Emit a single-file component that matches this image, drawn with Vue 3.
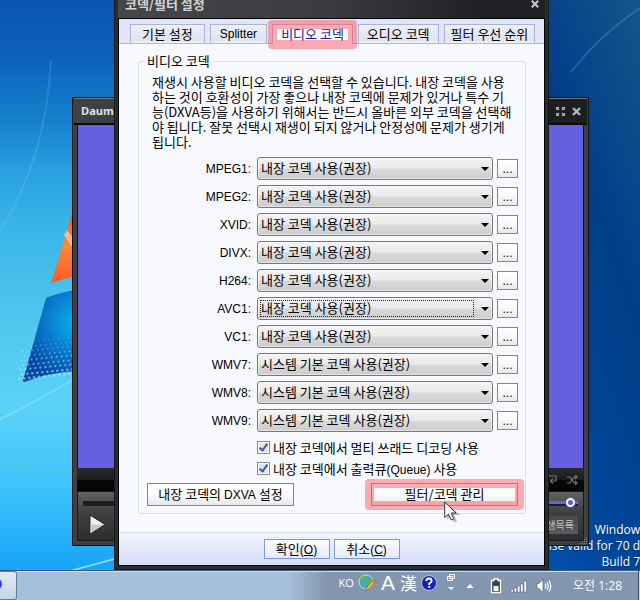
<script setup>
import { reactive, ref } from 'vue'

const tabs = [
  { name: '기본 설정', size: 'roomy' },
  { name: 'Splitter', size: 'latin' },
  { name: '비디오 코덱', size: '' },
  { name: '오디오 코덱', size: '' },
  { name: '필터 우선 순위', size: 'tight' }
]
const activeTab = ref('비디오 코덱')

const builtIn = '내장 코덱 사용(권장)'
const system = '시스템 기본 코덱 사용(권장)'
const codecs = reactive([
  { id: 'MPEG1', value: builtIn },
  { id: 'MPEG2', value: builtIn },
  { id: 'XVID', value: builtIn },
  { id: 'DIVX', value: builtIn },
  { id: 'H264', value: builtIn },
  { id: 'AVC1', value: builtIn, focused: true },
  { id: 'VC1', value: builtIn },
  { id: 'WMV7', value: system },
  { id: 'WMV8', value: system },
  { id: 'WMV9', value: system }
])
const multiThread = ref(true)
const outputQueue = ref(true)

// Halftone dots along the lower edge of the blue pane
const dots = []
for (let r = 0; r < 9; r++) {
  for (let c = 0; c < 13; c++) {
    dots.push({ x: 24 + c * 5 + (r % 2) * 2.5 - r * 0.6, y: 342 + r * 4.6 - c * 0.5, r: 0.5 + r * 0.11 })
  }
}
</script>

<template>
  <div class="desktop">
    <main class="workspace">
      <div class="wallpaper-right"></div>
      <svg class="logo" width="120" height="571" viewBox="0 0 120 571" aria-hidden="true">
        <defs>
          <linearGradient id="orange" x1="0" y1="0" x2="0" y2="1">
            <stop offset="0" stop-color="#ee4a10" />
            <stop offset=".5" stop-color="#f98a3c" />
            <stop offset="1" stop-color="#fb5a20" />
          </linearGradient>
          <radialGradient id="pane" gradientUnits="userSpaceOnUse" cx="78" cy="322" r="62">
            <stop offset="0" stop-color="#06b8f0" />
            <stop offset=".45" stop-color="#0880d2" />
            <stop offset="1" stop-color="#0646a0" />
          </radialGradient>
        </defs>
        <path d="M51 60C48 125 32 180 0 231" fill="none" stroke="#9ad8ff" stroke-opacity=".18" stroke-width="2" />
        <path d="M0 419Q30 405 72 380" fill="none" stroke="#c9f3ff" stroke-opacity=".3" stroke-width="2" />
        <path d="M0 467L72 472" stroke="#6ee08a" stroke-opacity=".4" />
        <path d="M70 571L118 558" stroke="#c6efff" stroke-opacity=".8" stroke-width="1.5" />
        <path d="M74 206L51 283L74 276Z" fill="url(#orange)" />
        <path d="M67 230L74 239V250L64 235Z" fill="#ffc49a" fill-opacity=".8" />
        <path d="M46 298Q58 293 74 290V371Q48 373 24 382Q22 381 24 377Z" fill="url(#pane)" />
        <circle v-for="(d, i) in dots" :key="i" :cx="d.x" :cy="d.y" :r="d.r" fill="#a8ecff" fill-opacity=".6" />
      </svg>
      <svg class="streak" width="91" height="97" viewBox="0 0 91 97" aria-hidden="true">
        <path d="M91 8Q52 34 22 72" fill="none" stroke="#7fb6dc" stroke-opacity=".25" stroke-width="2" />
      </svg>

      <div class="watermark">
        <div>Window</div>
        <div>ense valid for 70 d</div>
        <div>Build 7</div>
      </div>

      <section class="player" aria-label="Daum">
        <header class="player-title">
          <span>Daum</span>
          <span class="window-icons">
            <svg width="9" height="9" viewBox="0 0 9 9" fill="none" stroke="#b4b4b6" stroke-width="1.200">
              <path d="M.7 3V.7H3M6 .7h2.300V3M8.300 6v2.300H6M3 8.300H.7V6M1 1l2 2M8 1L6 3M8 8L6 6M1 8l2-2" />
            </svg>
            <svg width="9" height="9" viewBox="0 0 9 9" stroke="#b4b4b6" stroke-width="2.400"><path d="M1 1l7 7M8 1L1 8" /></svg>
          </span>
        </header>
        <div class="video"></div>
        <div class="status">
          <svg width="12" height="10" viewBox="0 0 12 10" fill="none" stroke="#747478" stroke-width="1.200">
            <path d="M2 1h7v5H4M6 3.500L3.500 6 6 8.500" />
          </svg>
          <svg width="11" height="10" viewBox="0 0 11 10" fill="none" stroke="#747478" stroke-width="1.200">
            <path d="M0 2h3l4 6h3M0 8h3l4-6h3M8 0l2 2-2 2M8 6l2 2-2 2" />
          </svg>
        </div>
        <div class="controls">
          <div class="seek"><i></i></div>
          <svg class="knob" width="11" height="11" viewBox="0 0 11 11">
            <circle cx="5.500" cy="5.500" r="5" fill="#f4f4ff" stroke="#333" stroke-width=".6" />
            <circle cx="5.500" cy="5.500" r="2.500" fill="#5a5be6" />
          </svg>
          <div class="control-row">
            <svg width="17" height="21" viewBox="0 0 17 21">
              <path d="M1 1L16 10.500L1 20Z" fill="#f1f1f1" stroke="#222" />
              <path d="M1.500 10.500H15L1.500 19Z" fill="#c9c9cb" />
            </svg>
            <button type="button" class="playlist">재생목록</button>
          </div>
        </div>
        <svg class="grip" width="8" height="8" viewBox="0 0 8 8" fill="#8b8b8b">
          <path d="M6 0h1v1H6zM4 2h1v1H4zM6 2h1v1H6zM2 4h1v1H2zM4 4h1v1H4zM6 4h1v1H6zM0 6h1v1H0zM2 6h1v1H2zM4 6h1v1H4zM6 6h1v1H6z" />
        </svg>
      </section>

      <section class="dialog" role="dialog" aria-labelledby="dialog-title">
        <header class="titlebar">
          <h1 id="dialog-title">코덱/필터 설정</h1>
          <button type="button" aria-label="닫기">
            <svg width="8" height="8" viewBox="0 0 8 8" stroke="#c8c8c8" stroke-width="2"><path d="M.8.8l6.400 6.400M7.200.8L.8 7.200" /></svg>
          </button>
        </header>
        <div class="body">
          <div class="tabs" role="tablist">
            <button
              v-for="t in tabs"
              :key="t.name"
              type="button"
              role="tab"
              class="tab"
              :class="[t.size, { active: activeTab === t.name }]"
              :aria-selected="activeTab === t.name"
              @click="activeTab = t.name"
            >{{ t.name }}</button>
          </div>

          <fieldset>
            <legend>비디오 코덱</legend>
            <p class="description">
              재생시 사용할 비디오 코덱을 선택할 수 있습니다. 내장 코덱을 사용<br />
              하는 것이 호환성이 가장 좋으나 내장 코덱에 문제가 있거나 특수 기<br />
              능(DXVA등)을 사용하기 위해서는 반드시 올바른 외부 코덱을 선택해<br />
              야 됩니다. 잘못 선택시 재생이 되지 않거나 안정성에 문제가 생기게<br />
              됩니다.
            </p>
            <div class="codecs">
              <div v-for="c in codecs" :key="c.id" class="codec">
                <label class="latin" :for="c.id">{{ c.id }}:</label>
                <span class="combo" :class="{ focused: c.focused }">
                  <select :id="c.id" v-model="c.value">
                    <option>{{ c.value }}</option>
                  </select>
                </span>
                <button type="button" class="more">...</button>
              </div>
            </div>
            <div class="checks">
              <label><input v-model="multiThread" type="checkbox" />내장 코덱에서 멀티 쓰래드 디코딩 사용</label>
              <label><input v-model="outputQueue" type="checkbox" /><span>내장 코덱에서 출력큐<span class="latin">(Queue)</span> 사용</span></label>
            </div>
            <div class="actions">
              <button type="button" class="push">내장 코덱의 <span class="latin">DXVA</span> 설정</button>
              <button type="button" class="push marked">필터/코덱 관리</button>
            </div>
          </fieldset>

          <footer>
            <button type="button">확인<span class="latin">(<u>O</u>)</span></button>
            <button type="button">취소<span class="latin">(<u>C</u>)</span></button>
          </footer>
        </div>
      </section>

      <svg class="cursor" width="16" height="23" viewBox="0 0 16 23" aria-hidden="true">
        <path d="M3 3v16l4-4 3 6.500 3-1.500-3-6h6Z" fill="#000" fill-opacity=".25" />
        <path d="M.7 1v15.500L4.500 13l2.700 6 2.600-1.200L7.200 12H12Z" fill="#fff" stroke="#333" stroke-width="1" />
      </svg>
    </main>

    <footer class="taskbar">
      <button type="button" class="task" aria-label="Daum">
        <svg width="16" height="20" viewBox="0 0 16 20"><circle cx="-4" cy="10" r="6" fill="#2a48e8" /></svg>
      </button>
      <div class="tray">
        <div class="language">
          <span class="ko">KO</span>
          <svg width="18" height="18" viewBox="0 0 18 18">
            <circle cx="8" cy="8" r="7" fill="#4aa3dc" stroke="#d7ebf7" stroke-width=".8" />
            <path d="M2 5Q5 1 9 2L8 5 5 6 6 9 3 10ZM9 7L13 4 15 8 11 13 8 12Z" fill="#55b548" />
            <path d="M16 5L9 13 7.500 16.500 11 15 17.500 7Z" fill="#f3c64a" stroke="#8a5a17" stroke-width=".7" />
            <path d="M16 5l1.500 2-1.500 1.800L14.300 7Z" fill="#df6b52" />
          </svg>
          <span class="ime-a">A</span>
          <span class="ime-han">漢</span>
          <svg width="18" height="18" viewBox="1 0 18 18">
            <circle cx="10" cy="9" r="7.500" fill="#1226b0" stroke="#b8c4e6" />
            <path d="M7.300 7Q7.300 4.500 10 4.500T12.700 7Q12.700 8.300 10.200 9.500V11" fill="none" stroke="#fff" stroke-width="1.800" />
            <path d="M9.200 12h2v1.800h-2z" fill="#fff" />
          </svg>
          <svg width="18" height="20" viewBox="0 0 18 20">
            <path d="M7.500 1.500h5v4h-5zM5.500 3.500h5v4h-5z" fill="#8c9db4" stroke="#fff" />
            <path d="M6 14h6l-3 3z" fill="#fff" />
          </svg>
          <svg width="12" height="18" viewBox="0 0 12 18"><path d="M1.500 14.500l4.500-5 4.500 5z" fill="#fff" stroke="#5c6d84" stroke-width=".5" /></svg>
        </div>
        <div class="status-icons">
          <svg width="12" height="16" viewBox="0 0 12 16">
            <path d="M4 1h4v1.500h2.500v12h-9v-12H4z" fill="#39424f" stroke="#fff" stroke-width="1.300" />
            <path d="M3.500 8h5v5h-5z" fill="#fff" />
          </svg>
          <svg width="18" height="14" viewBox="0 0 18 14" fill="#fff" stroke="#48566b" stroke-width=".5">
            <path d="M1 10.500h2.500V13H1zM4.200 9h2.500v4H4.200zM7.400 7h2.500v6H7.400zM10.600 5h2.500v8h-2.500z" />
            <path d="M14 2h2.500v11H14z" />
          </svg>
          <svg width="16" height="16" viewBox="0 0 16 16" fill="none" stroke="#fff" stroke-width="1.200">
            <path d="M1 5.500h2l4-4v13l-4-4H1z" fill="#fff" stroke="#48566b" stroke-width=".6" />
            <path d="M9 5.500q1.500 2.500 0 5M11 4q2.500 4 0 8M13 2.500q3.500 5.500 0 11" />
          </svg>
        </div>
        <time>오전 1:28</time>
      </div>
      <button type="button" class="show-desktop" aria-label="바탕 화면 보기"></button>
    </footer>
  </div>
</template>

<style>
body {
  margin: 0;
}
</style>

<style scoped>
* {
  box-sizing: border-box;
}

.desktop {
  display: flex;
  flex-direction: column;
  min-height: 100vh;
  overflow: hidden;
  color: #000;
  font: 13px/16px "Noto Sans CJK KR", sans-serif;
}

button,
select,
input {
  margin: 0;
  font: inherit;
  color: inherit;
}

button {
  padding: 0;
  white-space: nowrap;
}

.latin {
  font-family: "Liberation Sans", "Noto Sans CJK KR", sans-serif;
  font-size: 12px;
}

span.latin {
  line-height: 1px;
}

.workspace {
  position: relative;
  flex: 1;
  overflow: hidden;
  background: linear-gradient(#0a54b0 0, #0d62ba 10%, #1580cc 21%, #279ddf 29%, #3bb5e8 40%, #50c6ef 56%, #5bd2f8 72%, #3cc2fb 86%, #17a4f8 100%);
}

.wallpaper-right {
  position: absolute;
  inset: 0 0 0 50%;
  background: linear-gradient(70deg, #0060cc 0, #0057bb 35%, #00479a 55%, #013f88 78%, #14568c 100%);
}

.logo {
  position: absolute;
  left: 0;
  top: 0;
}

.streak {
  position: absolute;
  right: 0;
  top: 0;
}

.watermark {
  position: absolute;
  right: 0;
  bottom: 0;
  color: #fff;
  font: 12px/16px "Open Sans", sans-serif;
  text-align: right;
  text-shadow: 0 1px 1px #00306e;
  white-space: nowrap;
}

/* Player window behind the dialog */
.player {
  position: absolute;
  left: 72px;
  right: 51px;
  top: 97px;
  bottom: 24px;
  display: flex;
  flex-direction: column;
  border: 1px solid #111;
  padding: 0 4px 4px;
  background: #3f4043;
}

.player-title {
  display: flex;
  align-items: center;
  justify-content: space-between;
  height: 27px;
  margin: 0 -3px;
  padding: 0 6px 0 7px;
  border-top: 1px solid #77787a;
  border-bottom: 2px solid #0a0a0c;
  background: linear-gradient(90deg, #404145, #303135 50%, #1d1e21 90%);
  color: #e4e4e4;
  font: bold 11px/16px "Open Sans", sans-serif;
}

.window-icons {
  display: flex;
  gap: 7px;
}

.video {
  flex: 1;
  border: solid #111;
  border-width: 0 1px;
  background: #6361dd;
}

.status {
  display: flex;
  align-items: center;
  justify-content: flex-end;
  gap: 8px;
  height: 23px;
  padding-right: 6px;
  background: linear-gradient(#292a2f, #1c1d20 50%, #08090c 52%, #050507);
}

.controls {
  position: relative;
  height: 50px;
  padding: 9px 5px 0;
  border: 1px solid #18191b;
  background: linear-gradient(#606163, #414244 40%, #2c2d2f);
}

.seek {
  display: flex;
  justify-content: flex-end;
  height: 5px;
  background: #1d1e20;
}

.seek i {
  width: 40px;
  height: 3px;
  background: #6361ee;
}

.knob {
  position: absolute;
  right: 7px;
  top: 5px;
}

.control-row {
  display: flex;
  align-items: center;
  justify-content: space-between;
  padding: 8px 0 0 6px;
}

.playlist {
  width: 54px;
  height: 18px;
  padding-right: 4px;
  border: 0;
  background: linear-gradient(#48494c, #5a5b5f);
  color: #c3c3c5;
  font-size: 10px;
  text-align: right;
}

.grip {
  position: absolute;
  right: 0;
  bottom: 0;
}

/* Codec dialog */
.dialog {
  position: absolute;
  left: 114px;
  right: 91px;
  top: -9px;
  border: 4px solid #2b2c30;
  outline: 1px solid #17181a;
  outline-offset: -1px;
  background: #000;
}

.titlebar {
  display: flex;
  align-items: flex-start;
  justify-content: space-between;
  height: 23px;
  padding: 1px 6px 0 7px;
  background: linear-gradient(90deg, #46474a, #3a3b3f 50%, #202124 85%);
}

h1 {
  margin: 0;
  color: #d5d5d6;
  font-size: 13px;
  line-height: 16px;
}

.titlebar button {
  display: flex;
  padding: 4px 0;
  border: 0;
  background: none;
}

.body {
  border: 1px solid #000;
  background: #f8f9ff;
}

.tabs {
  display: flex;
  align-items: flex-end;
  gap: 5px;
  height: 25px;
  padding: 0 11px;
  border-bottom: 1px solid #aab8dc;
  background: #e1e4fa;
}

.tab {
  height: 19px;
  padding: 0 8px;
  border: 1px solid #a9b4d0;
  border-bottom: 0;
  background: linear-gradient(#eef0f7, #e0e3ee 85%, #f3f4fb);
  line-height: 16px;
}

.tab.roomy {
  padding: 0 11px;
}

.tab.tight {
  padding: 0 6px;
}

.tab.latin {
  padding: 0 9px;
}

.tab.active {
  position: relative;
  height: 20px;
  padding-bottom: 2px;
  margin-bottom: -1px;
  background: #fbfbff;
  color: #22229a;
}

/* Highlighter frame */
.tab.active::after,
.marked::after {
  content: "";
  position: absolute;
  inset: -5px;
  border: 9px solid rgba(250, 92, 102, 0.5);
  border-radius: 4px;
}

fieldset {
  min-width: 0;
  margin: 9px 18px 18px 19px;
  padding: 0 7px 7px 8px;
  border: 1px solid #d5dfe6;
  border-radius: 3px;
}

legend {
  margin-left: -3px;
  padding: 0 3px;
}

.description {
  margin: 5px 0 8px 5px;
  line-height: 15px;
  white-space: nowrap;
}

.codecs {
  display: flex;
  flex-direction: column;
  gap: 5px;
}

.codec {
  display: flex;
  align-items: center;
}

.codec label {
  width: 104px;
  text-align: right;
}

.combo {
  position: relative;
  flex: 1;
  height: 23px;
  margin: 0 4px 0 6px;
}

.combo select {
  width: 100%;
  height: 23px;
  padding: 0 20px 1px 3px;
  appearance: none;
  border: 1px solid #76777a;
  border-radius: 3px;
  background: linear-gradient(#f4f4f4, #e9e9e9 48%, #dadada 52%, #cccccc);
  box-shadow: inset 0 0 0 1px rgba(255, 255, 255, 0.5);
}

.combo::before {
  content: "";
  position: absolute;
  right: 4px;
  top: 10px;
  border: 4px solid transparent;
  border-top-color: #000;
  border-bottom: 0;
  pointer-events: none;
}

.combo.focused::after {
  content: "";
  position: absolute;
  inset: 3px 19px 3px 3px;
  border: 1px dotted #222;
  pointer-events: none;
}

.more {
  width: 21px;
  height: 19px;
  border: 1px solid #85868a;
  background: linear-gradient(#fff, #f6f6f6 60%, #e8e8ea);
  font: 12px/16px "Liberation Sans", sans-serif;
}

.checks {
  margin-top: 5px;
  padding-left: 110px;
}

.checks label {
  display: flex;
  align-items: center;
  gap: 3px;
  height: 21px;
}

.checks input {
  display: grid;
  place-content: center;
  width: 13px;
  height: 13px;
  appearance: none;
  border: 1px solid #8d8e92;
  background: #dfe3ec;
  box-shadow: inset 0 0 0 1px #fff;
}

.checks input:checked::before {
  content: "";
  width: 3px;
  height: 7px;
  margin-bottom: 2px;
  border: solid #3f59a0;
  border-width: 0 2px 2px 0;
  transform: rotate(35deg);
}

.actions {
  display: flex;
  justify-content: space-between;
  margin-top: 4px;
}

.push {
  position: relative;
  width: 147px;
  height: 23px;
  padding-bottom: 2px;
  border: 1px solid #85868a;
  background: linear-gradient(#fff, #fafafa 50%, #e9e9eb);
}

.marked::after {
  inset: -5px -7px;
}

.body > footer {
  display: flex;
  justify-content: center;
  gap: 4px;
  padding: 6px 0;
  border-top: 1px solid #d5dbe8;
  background: linear-gradient(#f2f4fd, #d5dcf5);
}

.body > footer button {
  width: 66px;
  height: 20px;
  border: 1px solid #7f98d8;
  background: linear-gradient(#fdfdff, #e3e9fa);
  line-height: 16px;
}

.cursor {
  position: absolute;
  left: 444px;
  top: 501px;
}

/* Taskbar */
.taskbar {
  display: flex;
  align-items: stretch;
  justify-content: space-between;
  height: 30px;
  border-top: 1px solid #3d5a7a;
  box-shadow: inset 0 1px #cfdeed;
  background: linear-gradient(90deg, #a6bfdb 0, #a6bfdb 45%, #8496ae 51%, #8397b1 100%);
}

.task {
  width: 17px;
  border: 1px solid #5f7a9b;
  border-left: 0;
  border-radius: 0 3px 3px 0;
  background: linear-gradient(#e2ebf5, #c3d5e9);
}

.tray {
  display: flex;
  flex: 1;
  justify-content: flex-end;
  align-items: center;
  color: #fff;
}

.language {
  display: flex;
  align-items: center;
  gap: 4px;
  padding-bottom: 5px;
  margin-right: 14px;
}

.language span {
  width: 16px;
  text-align: center;
}

.ko {
  font: 11px/16px "Open Sans", sans-serif;
}

.ime-a {
  font: 21px/20px "Liberation Sans", sans-serif;
}

.ime-han {
  font-size: 17px;
  line-height: 20px;
}

.status-icons {
  display: flex;
  align-items: center;
  gap: 8px;
  margin-right: 21px;
}

time {
  margin-right: 16px;
  font: 12px/16px "Open Sans", "Noto Sans CJK KR", sans-serif;
}

.show-desktop {
  width: 2px;
  border: 0;
  border-left: 1px solid #3c4a5c;
  background: #cdd8e6;
}
</style>
